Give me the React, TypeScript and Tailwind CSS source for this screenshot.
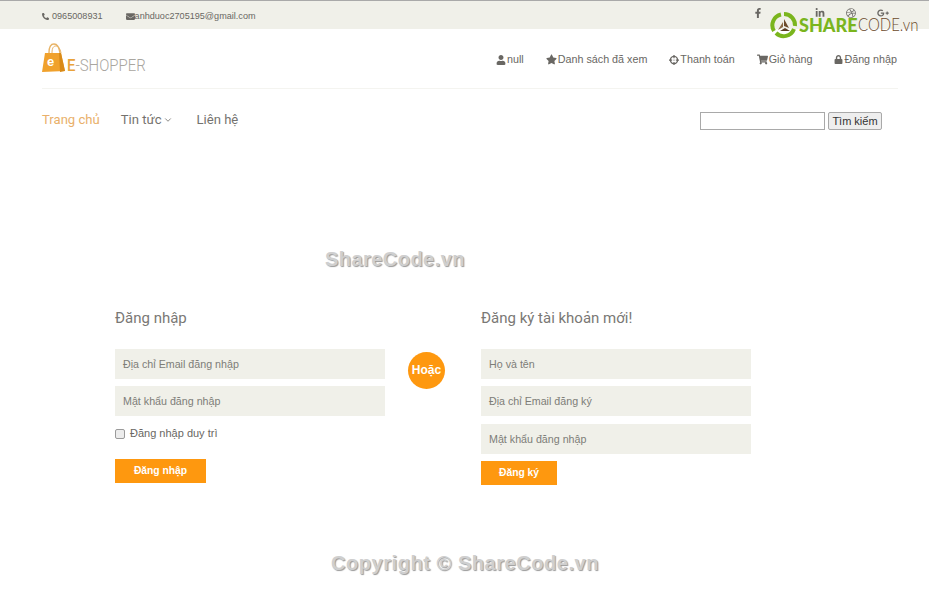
import React from 'react';
import { ChevronDown } from 'lucide-react';
import {
  FaPhoneAlt,
  FaEnvelope,
  FaUser,
  FaStar,
  FaCrosshairs,
  FaShoppingCart,
  FaLock,
  FaFacebookF,
  FaTwitter,
  FaLinkedinIn,
  FaDribbble,
  FaGooglePlusG,
} from 'react-icons/fa';

const headerLinks = [
  { label: 'null', icon: <FaUser className="h-[10px] w-[10px]" /> },
  { label: 'Danh sách đã xem', icon: <FaStar className="h-[11px] w-[11px]" /> },
  { label: 'Thanh toán', icon: <FaCrosshairs className="h-[10px] w-[10px]" /> },
  { label: 'Giỏ hàng', icon: <FaShoppingCart className="h-[11px] w-[11px]" /> },
  { label: 'Đăng nhập', icon: <FaLock className="h-[9px] w-[9px]" /> },
];

const Logo = () => (
  <div className="flex items-end">
    <svg width="24" height="30" viewBox="0 0 24 30">
      <path d="M7 10 C7 2 10 1 12 1 C15 1 17 3 18 10" fill="none" stroke="#e8b365" strokeWidth="1.4" />
      <path d="M10 10 C10 4 12 3 14 3 C16 3 18 5 19 10" fill="none" stroke="#e8b365" strokeWidth="1" />
      <path d="M3 10 L19 10 L23 28 L0 29 Z" fill="#f0a12c" />
      <path d="M17 10 L19 10 L23 28 L18 29 Z" fill="#d98a17" />
      <text x="5" y="23" fontSize="13" fontWeight="700" fill="#fff" fontFamily="Liberation Sans, sans-serif">e</text>
    </svg>
    <span className="ml-[1px] origin-left font-['Roboto',sans-serif] text-[17px] leading-[16px] font-light text-[#a9a6a0] [transform:scaleX(0.88)]">
      <span className="font-medium text-[#e9a33a]">E</span>-SHOPPER
    </span>
  </div>
);

const ShareCodeBadge = () => (
  <div className="absolute top-[11px] left-[770px] flex items-center">
    <svg width="28" height="28" viewBox="0 0 28 28">
      <path d="M14 3 A11 11 0 0 1 25 15" fill="none" stroke="#7ab51d" strokeWidth="4" />
      <path d="M24 18 A11 11 0 0 1 6 22" fill="none" stroke="#7ab51d" strokeWidth="4" />
      <path d="M4 20 A11 11 0 0 1 11 3.5" fill="none" stroke="#7ab51d" strokeWidth="4" />
      <path d="M14 8 L19 17 L14 15 Z" fill="#6b4a2b" />
      <path d="M8 19 L13 11 L13 16 Z" fill="#8a6a45" />
      <path d="M10 20 L20 20 L15 17 Z" fill="#5a3d22" />
    </svg>
    <span className="ml-[1px] flex font-['Lato',sans-serif] leading-[28px] whitespace-nowrap text-[#6b4a2b]">
      <span className="text-[18px] font-black text-[#7ab51d]">SHARE</span>
      <span className="origin-left text-[17px] font-light [transform:scaleX(0.88)]">CODE.vn</span>
    </span>
  </div>
);

const Field = ({ placeholder }: { placeholder: string }) => (
  <div className="flex h-[30px] items-center bg-[#f0f0e9] px-2 text-[10.7px] text-[#7d7d78]">{placeholder}</div>
);

const ORANGE_BTN =
  'flex h-6 items-center justify-center bg-[#fe980f] text-[10.3px] font-bold text-white';

export default function App() {
  return (
    <div className="relative h-[592px] w-[929px] overflow-hidden bg-white font-['Liberation_Sans',Arial,sans-serif] text-[#696763]">
      {/* top bar */}
      <div className="h-[29px] border-t border-[#a9a9a9] bg-[#f0f0e9]">
        <div className="flex items-center pt-[6px] pr-[40px] pl-[42px] text-[9.1px] leading-[12px] text-[#696763]">
          <span className="flex items-center gap-[3px]">
            <FaPhoneAlt className="h-[7px] w-[7px]" />
            0965008931
          </span>
          <span className="ml-[23px] flex items-center">
            <FaEnvelope className="h-[9px] w-[9px]" />
            anhduoc2705195@gmail.com
          </span>
          <div className="ml-auto flex items-center gap-[21px] pb-[6px] text-[#696763]">
            <FaFacebookF className="h-[10px] w-[10px]" />
            <FaTwitter className="h-[10px] w-[10px] opacity-0" />
            <FaLinkedinIn className="h-[10px] w-[10px]" />
            <FaDribbble className="h-[10px] w-[10px]" />
            <FaGooglePlusG className="h-[12px] w-[12px]" />
          </div>
        </div>
      </div>

      {/* logo row */}
      <div className="mr-[31px] ml-[42px] flex h-[60px] items-center justify-between border-b border-[#f4f4f0] pb-[1px]">
        <Logo />
        <nav className="flex items-center gap-[22px] pt-[3px] pr-[1px] text-[10.75px] text-[#696763]">
          {headerLinks.map((link) => (
            <span key={link.label} className="flex items-center gap-[1px] whitespace-nowrap">
              {link.icon}
              {link.label}
            </span>
          ))}
        </nav>
      </div>

      {/* main nav */}
      <div className="flex items-center justify-between pt-[20px] pr-[47px] pl-[42px]">
        <nav className="flex items-center font-['Roboto',sans-serif] text-[13.1px] leading-[20px] text-[#74726e]">
          <span className="text-[#e9b06a]">Trang chủ</span>
          <span className="ml-[21px] flex items-center gap-[2px]">
            Tin tức
            <ChevronDown className="h-[10px] w-[10px]" strokeWidth={2} />
          </span>
          <span className="ml-[23px]">Liên hệ</span>
        </nav>
        <div className="mt-[3px] flex items-center gap-[3px]">
          <div className="h-[18px] w-[125px] border border-[#a9a9a9] bg-white" />
          <button className="h-[18px] w-[54px] rounded-[2px] border border-[#a9a9a9] bg-[#eeeeee] pb-[1px] text-[11px] leading-[14px] text-[#333]">
            Tìm kiếm
          </button>
        </div>
      </div>

      {/* login / signup */}
      <div className="flex pt-[178px] pl-[115px]">
        <div className="w-[270px]">
          <h2 className="font-['Roboto',sans-serif] text-[15px] leading-[20px] text-[#7a7875]">Đăng nhập</h2>
          <div className="mt-[21px] flex flex-col gap-[7px]">
            <Field placeholder="Địa chỉ Email đăng nhập" />
            <Field placeholder="Mật khẩu đăng nhập" />
          </div>
          <label className="mt-[10px] flex h-[15px] items-center text-[11px] text-[#696763]">
            <span className="h-[10px] w-[10px] rounded-[2px] border border-[#9a9a9a] bg-[#ececec]" />
            <span className="ml-[5px]">Đăng nhập duy trì</span>
          </label>
          <div className={`${ORANGE_BTN} mt-[18px] w-[91px]`}>Đăng nhập</div>
        </div>

        <div className="mt-[44px] ml-[23px] flex h-[37px] w-[37px] shrink-0 items-center justify-center rounded-full bg-[#fe980f] pb-[2px] text-[12px] font-bold text-[#fff]">
          Hoặc
        </div>

        <div className="ml-[36px] w-[270px]">
          <h2 className="font-['Roboto',sans-serif] text-[15px] leading-[20px] text-[#7a7875]">
            Đăng ký tài khoản mới!
          </h2>
          <div className="mt-[21px] flex flex-col">
            <Field placeholder="Họ và tên" />
            <div className="mt-[7px]">
              <Field placeholder="Địa chỉ Email đăng ký" />
            </div>
            <div className="mt-[8px]">
              <Field placeholder="Mật khẩu đăng nhập" />
            </div>
          </div>
          <div className={`${ORANGE_BTN} mt-[7px] w-[76px]`}>Đăng ký</div>
        </div>
      </div>

      {/* watermarks */}
      <ShareCodeBadge />
      <div className="absolute top-[247px] left-[325px] text-[20px] leading-[24px] font-bold tracking-[0.45px] whitespace-nowrap text-[#cfcfcf] [text-shadow:1px_1px_1px_#9a9a9a]">
        ShareCode.vn
      </div>
      <div className="absolute top-[551px] left-[331px] text-[20px] leading-[24px] font-bold tracking-[0.55px] whitespace-nowrap text-[#cfcfcf] [text-shadow:1px_1px_1px_#9a9a9a]">
        Copyright © ShareCode.vn
      </div>
    </div>
  );
}
